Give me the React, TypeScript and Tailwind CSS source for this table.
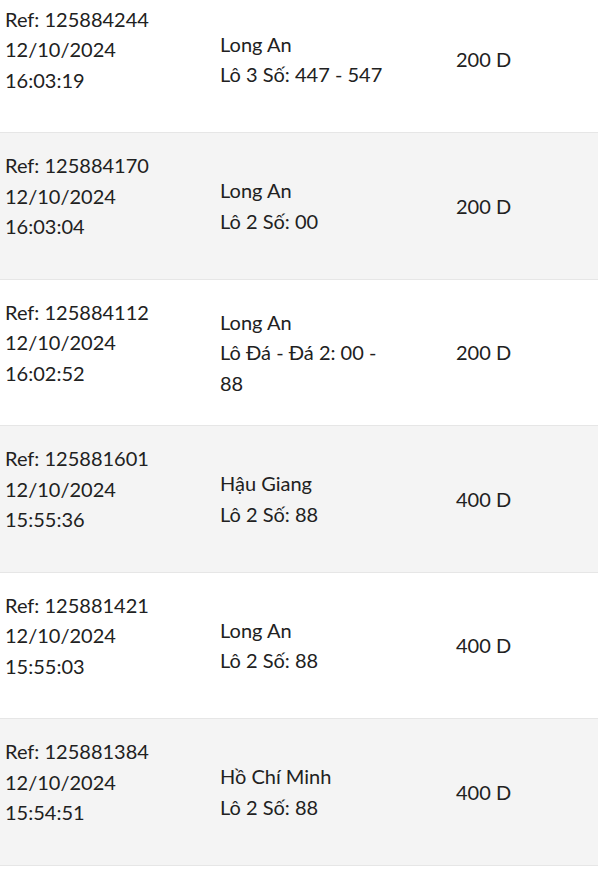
import React from "react";

type Row = { ref: string; date: string; time: string; place: string; bet: string; amount: string };

const rows: Row[] = [
  { ref: "125884244", date: "12/10/2024", time: "16:03:19", place: "Long An", bet: "Lô 3 Số: 447 - 547", amount: "200 D" },
  { ref: "125884170", date: "12/10/2024", time: "16:03:04", place: "Long An", bet: "Lô 2 Số: 00", amount: "200 D" },
  { ref: "125884112", date: "12/10/2024", time: "16:02:52", place: "Long An", bet: "Lô Đá - Đá 2: 00 - 88", amount: "200 D" },
  { ref: "125881601", date: "12/10/2024", time: "15:55:36", place: "Hậu Giang", bet: "Lô 2 Số: 88", amount: "400 D" },
  { ref: "125881421", date: "12/10/2024", time: "15:55:03", place: "Long An", bet: "Lô 2 Số: 88", amount: "400 D" },
  { ref: "125881384", date: "12/10/2024", time: "15:54:51", place: "Hồ Chí Minh", bet: "Lô 2 Số: 88", amount: "400 D" },
];

export default function App() {
  return (
    <div
      className="w-[598px] h-[874px] overflow-hidden bg-white text-[#212121]"
      style={{ fontFamily: "Lato, 'Noto Sans', sans-serif" }}
    >
      <div className="-mt-[13.5px] text-[20px] leading-[30.5px]">
        {rows.map((r, i) => (
          <div
            key={r.ref}
            className={`flex items-center py-[17px] border-b border-[#e6e6e6] ${i % 2 === 1 ? "bg-[#f4f4f4]" : "bg-white"}`}
          >
            <div className="w-[215px] shrink-0 pl-[5px] pb-[20px]">
              <div>Ref: {r.ref}</div>
              <div>{r.date}</div>
              <div>{r.time}</div>
            </div>
            <div className="w-[236px] shrink-0 pl-[5px] pr-[60px]">
              <div>{r.place}</div>
              <div>{r.bet}</div>
            </div>
            <div className="flex-1 pl-[5px]">{r.amount}</div>
          </div>
        ))}
      </div>
    </div>
  );
}
